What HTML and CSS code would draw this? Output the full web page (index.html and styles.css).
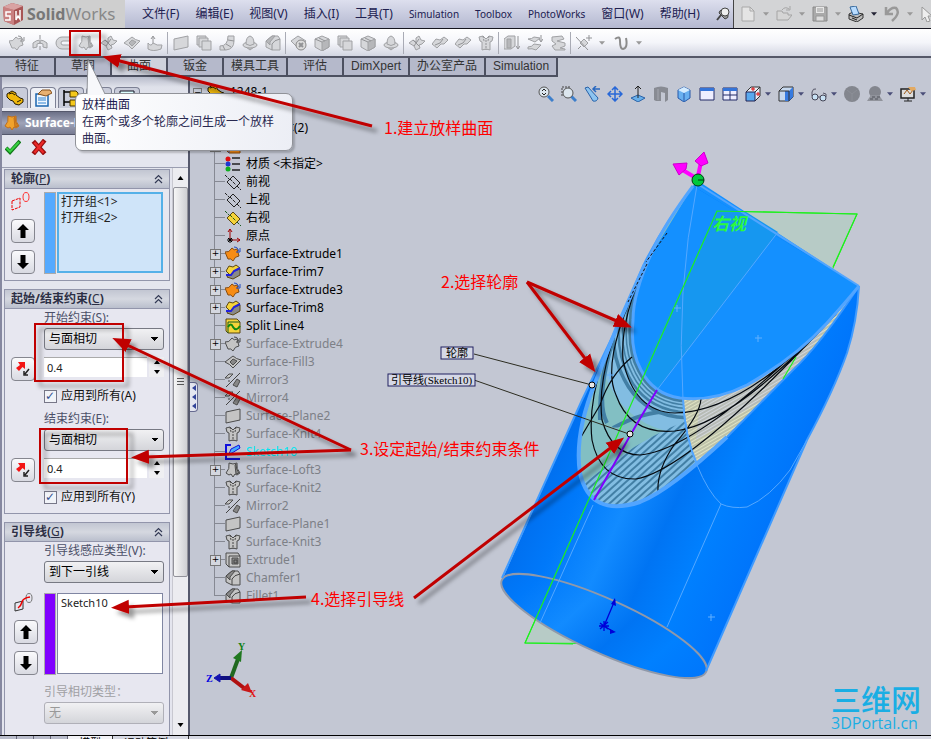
FILE: index.html
```html
<!DOCTYPE html>
<html lang="zh-CN">
<head>
    <meta charset="UTF-8">
    <title>SolidWorks</title>
    <link rel="stylesheet" href="styles.css">
</head>
<body>
<!-- icon sprite -->
<svg class="sprite" aria-hidden="true">
    <symbol id="drop" viewBox="0 0 7 4"><path d="M0 0h7L3.500 4z" fill="currentColor"/></symbol>
    <symbol id="extrude" viewBox="0 0 16 16"><path class="ic" d="M0 6q4 1 7-4 2 3 5 1l2 7q-4 0-6 5-2-3-5-2z"/><path class="ic2" d="M9 1q3-1 5 4M15 2v4h-4"/></symbol>
    <symbol id="revolve" viewBox="0 0 16 16"><path class="ic" d="M1 13V8q7-6 14 0v5l-4-1V9Q8 7 5 9v3z"/><path class="ic2" d="M8 0v4M8 6v3M8 11v4"/></symbol>
    <symbol id="sweep" viewBox="0 0 16 16"><path class="ic" d="M15 2H7a6 6 0 0 0 0 12h8v-4H8a2 2 0 0 1 0-4h7z"/></symbol>
    <symbol id="loft" viewBox="0 0 16 16"><path class="ic" d="M4 1l4 1 4-1q-1 6 3 10l-3 2-2-1-2 3-2-3-2 1-3-2q4-4 3-10z"/><path class="ic3" d="M10 3l1-1q0 6 3 9l-3 1z" stroke="none"/></symbol>
    <symbol id="bound" viewBox="0 0 16 16"><path class="ic" d="M0 8l4-3 3 2V3l3-2 2 4 4 1-3 3-3 1 1 3-4 2-2-4z"/><path class="ic2" d="M4 5l6 6M10 4l-5 7"/></symbol>
    <symbol id="fill" viewBox="0 0 16 16"><path class="ic" d="M0 8l8-6q3 3 8 4l-8 8q-3-4-8-6z"/><path class="ic3" d="M5 8l3-3 4 2-4 4z"/></symbol>
    <symbol id="free" viewBox="0 0 16 16"><path class="ic" d="M1 8q3 4 5 0 4 3 9 2l-1 4q-8 3-13 0z"/><path class="ic2" d="M6 8V2M4 4l2-3 2 3"/></symbol>
    <symbol id="plane" viewBox="0 0 16 16"><path class="ic" d="M1 4l14-3v11L1 15z"/></symbol>
    <symbol id="offset" viewBox="0 0 16 16"><path class="ic" d="M1 1h9v9H1z"/><path class="ic" d="M3 3h9v9H3z"/><path class="ic" d="M6 6h9v9H6z"/></symbol>
    <symbol id="ruled" viewBox="0 0 16 16"><path class="ic" d="M9 1h6v5q0 8-8 9H1v-4q8 0 8-10z"/><path class="ic2" d="M9 5l6 1M7 9l5 3M4 11l2 4"/></symbol>
    <symbol id="cap" viewBox="0 0 16 16"><path class="ic" d="M4 12q4 2 8 0l-4 3z"/><ellipse class="ic" cx="8" cy="10" rx="7" ry="3"/><path class="ic" d="M4 9q0-7 4-8 4 1 4 8-4 3-8 0z"/></symbol>
    <symbol id="fillet" viewBox="0 0 16 16"><path class="ic" d="M1 6l6-5h6l2 3v11H7l-6-3z"/><path class="ic3" d="M1 6l6-5 3 0-5 6v3z"/><path class="ic2" d="M7 15V9q2-4 8-5"/></symbol>
    <symbol id="del" viewBox="0 0 16 16"><path class="ic" d="M0 6l7-5 8 5-7 8z"/><circle cx="10" cy="10" r="5" fill="#ddd" stroke="#888"/><path class="ic2" stroke-width="2" d="M8 8l4 4M12 8l-4 4"/></symbol>
    <symbol id="box" viewBox="0 0 16 16"><path class="ic" d="M1 4l7-3 7 3v8l-7 4-7-4z"/><path class="ic3" d="M8 7l7-3v8l-7 4z"/><path class="ic2" d="M1 4l7 3M5 3l6 3"/></symbol>
    <symbol id="knit" viewBox="0 0 16 16"><path class="ic" d="M1 2l4-1 3 3 3-3 4 1-1 4-2 1v8l-4-1-4 1V7L2 6z"/><path class="ic2" d="M5 1l1 5M11 1l-1 5M8 5v10" stroke-dasharray="2 1"/></symbol>
    <symbol id="thick" viewBox="0 0 16 16"><path class="ic" d="M0 4l4-3h7v10l-4 3H0z"/><path class="ic3" d="M3 4h4v9H3z"/><path class="ic2" d="M14 1v12M12 11l2 3 2-3"/></symbol>
    <symbol id="swap" viewBox="0 0 16 16"><path class="ic" d="M1 4q4 0 6-2l6 1-5 4zM1 12q4 0 6-3l7 1-5 5q-4-2-8-1z"/><path class="ic2" d="M14 0v6M12 4l2 3 2-3"/></symbol>
    <symbol id="cut" viewBox="0 0 16 16"><path class="ic" d="M2 2l10-1 2 3-7 2 8 2v3l-5 2 5 1v1H5l-3-4 4-2-4-3z"/></symbol>
    <symbol id="refs" viewBox="0 0 16 16"><path class="ic" d="M4 8l4-4 4 4-4 4z"/><path class="ic2" d="M0 2l12 13M13 0v6M10 3h6M2 14l3-3"/></symbol>
    <symbol id="curve" viewBox="0 0 16 16"><path d="M2 4q5-4 5 2 0 8 3 8 5-1 3-11" fill="none" stroke="#8c8c8c" stroke-width="2"/></symbol>
    <symbol id="trim" viewBox="0 0 16 16"><path class="ic3" d="M4 9l11-4v6l-7 4-6-2z"/><path class="ic" d="M1 7l3-5 4 1 3-2 4 3-6 3-4 4z"/><path d="M1 11l5 0 3-4 6-3" fill="none" stroke="#2222dd" stroke-width="2"/></symbol>
    <symbol id="trimoff" viewBox="0 0 16 16"><path class="ic" d="M0 9l4-5 4 1 4-3 4 3-4 4-3 0-4 4z"/><path class="ic2" d="M3 10l5-2 3-4"/></symbol>
    <symbol id="split" viewBox="0 0 16 16"><path class="ic" d="M1 1h11l3 3v11H3L1 13z"/><path class="ic2" d="M3 4h12M3 4v11"/><path d="M3 9q3-5 5 0 3 5 7-1" fill="none" stroke="#118811" stroke-width="2"/></symbol>
    <symbol id="mirror" viewBox="0 0 16 16"><path class="ic" d="M0 6l4-4 4 0-4 4z"/><path class="ic3" d="M8 13l4-6 3 2-3 6z"/><path class="ic2" d="M1 15L15 1M3 9l2 0"/></symbol>
    <symbol id="refplane" viewBox="0 0 16 16"><path class="ic" d="M2 8l6-6 7 7-6 6z"/><path class="ic2" d="M0 1l4 4M12 12l4 4M5 5l6 6" stroke-dasharray="3 1"/></symbol>
    <symbol id="origin" viewBox="0 0 16 16"><path d="M5 12V1M3 4l2-3 2 3M5 12h10M12 10l3 2-3 2" fill="none" stroke="#a00000"/><path d="M3 10l4 4M7 10l-4 4M2 12h6M5 10v5" stroke="#000"/></symbol>
    <symbol id="mat" viewBox="0 0 16 16"><path d="M7 2h8M7 8h8M7 14h8" stroke="#222" stroke-width="1.500"/><circle cx="3" cy="3" r="2.500" fill="#e01010"/><circle cx="3" cy="8" r="2.500" fill="#2038d0"/><circle cx="3" cy="13" r="2.500" fill="#10b020"/></symbol>
    <symbol id="sketch" viewBox="0 0 16 16"><path d="M6 1H1v14h14" fill="none" stroke="#1111dd" stroke-width="2"/><path d="M4 10l2-5 8-4 1 3-8 5z" fill="#4af" stroke="#11d"/></symbol>
    <symbol id="boss" viewBox="0 0 16 16"><path class="ic" d="M1 1h12l2 3v11H4l-3-3z"/><path class="ic3" d="M7 6h6v6H7z"/><path class="ic2" d="M4 4h11M4 4v11M9 8h3v3H9z"/></symbol>
    <symbol id="part" viewBox="0 0 18 16"><path d="M1 4l5-3 4 2v2l4 3 3 1v3l-4 3-4-1-2-3-3-1-3-3z" fill="#f0b80c" stroke="#221800"/><path d="M3 4l3-1 3 2M11 12l4-2" stroke="#221800" fill="none"/></symbol>
    <symbol id="chev" viewBox="0 0 9 10"><path d="M1 5l3.500-3.500L8 5M1 9l3.500-3.500L8 9" fill="none" stroke="#333a55" stroke-width="1.200"/></symbol>
    <symbol id="up" viewBox="0 0 12 16"><path d="M6 1l6 6H8.500v8h-5V7H0z" fill="#000"/></symbol>
    <symbol id="down" viewBox="0 0 12 16"><path d="M6 15l6-6H8.500V1h-5v8H0z" fill="#000"/></symbol>
    <symbol id="flip" viewBox="0 0 14 14"><path d="M2 0h7v7L6.500 5 3 9 0 6l4-3z" fill="#f31414"/><path d="M13 7l-4 5M8 9v4h4" fill="none" stroke="#222" stroke-width="1.500"/></symbol>
</svg>

<header class="menubar">
    <div class="logo">
        <svg width="22" height="24" viewBox="0 0 22 24"><path d="M1 5l9-4 11 3v14l-9 5-10-4z" fill="#a85555"/><path d="M1 5l11 3v15L2 19z" fill="#c98080"/><path d="M1 5l9-4 11 3-9 4z" fill="#d9a3a3"/><path d="M9 10H4v4h4v4H3M14 9v9l2-4 2 3V8" fill="none" stroke="#fff" stroke-width="1.500"/></svg>
        <b>Solid</b><span>Works</span>
    </div>
    <nav class="menu">
        <a href="#">文件(F)</a>
        <a href="#">编辑(E)</a>
        <a href="#">视图(V)</a>
        <a href="#">插入(I)</a>
        <a href="#">工具(T)</a>
        <a href="#" class="en">Simulation</a>
        <a href="#" class="en">Toolbox</a>
        <a href="#" class="en">PhotoWorks</a>
        <a href="#">窗口(W)</a>
        <a href="#">帮助(H)</a>
        <svg width="14" height="14" viewBox="0 0 14 14"><path d="M1 13l4-5" stroke="#444" stroke-width="2"/><path d="M3 6l6 6q4-1 3-4L7 3Q3 3 3 6z" fill="#999" stroke="#444"/><circle cx="9" cy="5" r="4" fill="#eee" stroke="#444"/></svg>
    </nav>
    <div class="quick">
        <button aria-label="新建"><svg viewBox="0 0 16 16"><path d="M2 1h8l4 4v10H2z" fill="#e4e4e4" stroke="#a8a8a8"/><path d="M10 1v4h4" fill="none" stroke="#a8a8a8"/></svg></button><svg class="drop"><use href="#drop"/></svg>
        <button aria-label="打开"><svg viewBox="0 0 16 16"><path d="M1 14V5h5l1 2h5v2h4l-4 5z" fill="#d5d5d5" stroke="#a5a5a5"/><path d="M6 4q3-4 7-1M14 0v4h-4" fill="none" stroke="#a5a5a5"/></svg></button><svg class="drop"><use href="#drop"/></svg>
        <button aria-label="保存"><svg viewBox="0 0 16 16"><path d="M1 1h14v14H1z" fill="#aaa" stroke="#888"/><path d="M4 1h8v6H4z" fill="#e8e8e8"/><path d="M4 10h8v5H4zM5 3h6M5 5h6" fill="#ddd" stroke="#999"/></svg></button><svg class="drop"><use href="#drop"/></svg>
        <button aria-label="打印"><svg viewBox="0 0 16 16"><path d="M1 8l4-2 10 2v4l-6 4-8-3z" fill="#bbb" stroke="#333"/><path d="M2 1l6-1 3 8-6 1z" fill="#b8dcff" stroke="#37699c"/><path d="M1 9l8 3 6-4M4 12l5 2" fill="none" stroke="#222"/></svg></button><svg class="drop dark"><use href="#drop"/></svg>
        <button aria-label="撤消"><svg viewBox="0 0 16 16"><path d="M2 1v7h7M3 7q4-6 9-5 5 5-4 13" fill="none" stroke="#999" stroke-width="2.500"/></svg></button><svg class="drop"><use href="#drop"/></svg>
        <button aria-label="选择"><svg viewBox="0 0 16 16"><path d="M2 1l10 9H8l2 5-3 1-2-5-3 3z" fill="#eee" stroke="#999"/></svg></button>
    </div>
</header>

<div class="toolbar">
    <button aria-label="拉伸曲面"><svg><use href="#extrude"/></svg></button>
    <button aria-label="旋转曲面"><svg><use href="#revolve"/></svg></button>
    <button aria-label="扫描曲面"><svg><use href="#sweep"/></svg></button>
    <button aria-label="放样曲面"><svg><use href="#loft"/></svg></button>
    <button aria-label="边界曲面"><svg><use href="#bound"/></svg></button>
    <button aria-label="填充曲面"><svg><use href="#fill"/></svg></button>
    <button aria-label="自由形"><svg><use href="#free"/></svg></button>
    <i class="sep"></i>
    <button aria-label="平面区域"><svg><use href="#plane"/></svg></button>
    <button aria-label="等距曲面"><svg><use href="#offset"/></svg></button>
    <button aria-label="直纹曲面"><svg><use href="#ruled"/></svg></button>
    <button aria-label="中面"><svg><use href="#cap"/></svg></button>
    <button aria-label="圆角"><svg><use href="#fillet"/></svg></button>
    <i class="sep"></i>
    <button aria-label="删除面"><svg><use href="#del"/></svg></button>
    <button aria-label="替换面"><svg><use href="#box"/></svg></button>
    <button aria-label="移动面"><svg><use href="#offset"/></svg></button>
    <button aria-label="删除孔"><svg><use href="#box"/></svg></button>
    <button aria-label="分型面"><svg><use href="#cap"/></svg></button>
    <i class="sep"></i>
    <button aria-label="延伸曲面"><svg><use href="#bound"/></svg></button>
    <button aria-label="剪裁曲面"><svg><use href="#trimoff"/></svg></button>
    <button aria-label="解除剪裁"><svg><use href="#trimoff"/></svg></button>
    <button aria-label="缝合曲面"><svg><use href="#knit"/></svg></button>
    <i class="sep"></i>
    <button aria-label="加厚"><svg><use href="#thick"/></svg></button>
    <button aria-label="加厚切除"><svg><use href="#swap"/></svg></button>
    <button aria-label="使用曲面切除"><svg><use href="#cut"/></svg></button>
    <i class="sep"></i>
    <button aria-label="参考几何体"><svg><use href="#refs"/></svg></button><svg class="drop"><use href="#drop"/></svg>
    <button aria-label="曲线"><svg><use href="#curve"/></svg></button><svg class="drop"><use href="#drop"/></svg>
</div>

<nav class="tabs">
    <a href="#">特征</a>
    <a href="#">草图</a>
    <a href="#" class="active">曲面</a>
    <a href="#">钣金</a>
    <a href="#">模具工具</a>
    <a href="#">评估</a>
    <a href="#">DimXpert</a>
    <a href="#">办公室产品</a>
    <a href="#">Simulation</a>
</nav>

<main class="work">
    <aside class="panel">
        <div class="paneltabs">
            <button aria-label="设计树"><svg viewBox="0 0 18 16"><use href="#part"/></svg></button>
            <button aria-label="属性" class="on"><svg viewBox="0 0 18 18"><path d="M2 5h12v12H2z" fill="#eef6ff" stroke="#1c66b0" stroke-width="1.500"/><path d="M4 9h8M4 11h8M4 14h8" stroke="#2f82d0"/><path d="M4 5l4-4 8 0 2 3-6 3-4-1z" fill="#e8b070" stroke="#84501c"/></svg></button>
            <button aria-label="配置"><svg viewBox="0 0 18 18"><path d="M2 1v16M2 3h6M2 13h6" stroke="#000" stroke-width="1.500"/><path d="M8 2h6l2 2v4H8zM8 11h6l2 2v4H8z" fill="#f4c81c" stroke="#443300"/></svg></button>
            <button aria-label="尺寸"></button>
            <button aria-label="显示"><svg viewBox="0 0 18 18"><path d="M2 2h14v12H2z" fill="#dff" stroke="#112"/></svg></button>
        </div>
        <h2 class="title"><svg width="16" height="18" viewBox="0 0 16 16"><use href="#loft"/></svg>Surface-Loft</h2>
        <div class="confirm">
            <button aria-label="确定"><svg viewBox="0 0 16 14"><path d="M1 8l4 4L15 1" fill="none" stroke="#107818" stroke-width="4"/><path d="M1.500 8L5 11.500 14 2" fill="none" stroke="#38d040" stroke-width="2"/></svg></button>
            <button aria-label="取消"><svg viewBox="0 0 14 14"><path d="M2 2l10 11M12 1L2 13" stroke="#981010" stroke-width="4"/><path d="M3 3l8 9M11 2L3 12" stroke="#ec2828" stroke-width="2"/></svg></button>
        </div>
        <div class="scroller">
            <div class="groups">
                <section class="group profile">
                    <h3>轮廓(<u>P</u>)<svg><use href="#chev"/></svg></h3>
                    <div class="pick">
                        <div class="side">
                            <svg width="19" height="20" viewBox="0 0 19 20"><path d="M1 9l8-3v9l-8 3z" fill="none" stroke="#e00" stroke-dasharray="3 1"/><ellipse cx="15" cy="5" rx="3" ry="4.500" fill="none" stroke="#f33"/></svg>
                            <button class="sq" aria-label="上移"><svg width="12" height="16"><use href="#up"/></svg></button>
                            <button class="sq" aria-label="下移"><svg width="12" height="16"><use href="#down"/></svg></button>
                        </div>
                        <i class="swatch blue"></i>
                        <ul class="list sel">
                            <li>打开组&lt;1&gt;</li>
                            <li>打开组&lt;2&gt;</li>
                        </ul>
                    </div>
                </section>

                <section class="group">
                    <h3>起始/结束约束(<u>C</u>)<svg><use href="#chev"/></svg></h3>
                    <div class="form">
                        <label for="start">开始约束(S):</label>
                        <select id="start"><option>与面相切</option></select>
                        <div class="spin">
                            <button class="sq" aria-label="反向"><svg width="14" height="14"><use href="#flip"/></svg></button>
                            <input type="text" value="0.4" aria-label="起始相切长度">
                            <span class="arrows"><button aria-label="增加"><svg viewBox="0 0 6 4"><path d="M0 4h6L3 0z"/></svg></button><button aria-label="减少"><svg viewBox="0 0 6 4"><path d="M0 0h6L3 4z"/></svg></button></span>
                        </div>
                        <label class="check"><input type="checkbox" checked>应用到所有(A)</label>
                        <label for="end">结束约束(E):</label>
                        <select id="end"><option>与面相切</option></select>
                        <div class="spin">
                            <button class="sq" aria-label="反向"><svg width="14" height="14"><use href="#flip"/></svg></button>
                            <input type="text" value="0.4" aria-label="结束相切长度">
                            <span class="arrows"><button aria-label="增加"><svg viewBox="0 0 6 4"><path d="M0 4h6L3 0z"/></svg></button><button aria-label="减少"><svg viewBox="0 0 6 4"><path d="M0 0h6L3 4z"/></svg></button></span>
                        </div>
                        <label class="check"><input type="checkbox" checked>应用到所有(Y)</label>
                    </div>
                </section>

                <section class="group guide">
                    <h3>引导线(<u>G</u>)<svg><use href="#chev"/></svg></h3>
                    <div class="form">
                        <label for="gtype">引导线感应类型(V):</label>
                        <select id="gtype"><option>到下一引线</option></select>
                    </div>
                    <div class="pick">
                        <div class="side">
                            <svg width="19" height="20" viewBox="0 0 19 20"><path d="M1 10l8-2v8l-8 2z" fill="none" stroke="#333"/><ellipse cx="15" cy="5" rx="3" ry="4.500" fill="none" stroke="#777"/><path d="M4 15q3-2 4-6t8-5" fill="none" stroke="#e00" stroke-width="1.500"/></svg>
                            <button class="sq" aria-label="上移"><svg width="12" height="16"><use href="#up"/></svg></button>
                            <button class="sq" aria-label="下移"><svg width="12" height="16"><use href="#down"/></svg></button>
                        </div>
                        <i class="swatch purple"></i>
                        <ul class="list"><li>Sketch10</li></ul>
                    </div>
                    <div class="form">
                        <label for="tan" class="off">引导相切类型：</label>
                        <select id="tan" disabled><option>无</option></select>
                    </div>
                </section>
            </div>
            <div class="scrollbar">
                <svg viewBox="0 0 6 4"><path d="M0 4h6L3 0z"/></svg>
                <div class="thumb"><i></i></div>
                <svg viewBox="0 0 6 4"><path d="M0 0h6L3 4z"/></svg>
            </div>
        </div>
    </aside>

    <section class="view">
        <svg class="model" viewBox="190 77 741 658" preserveAspectRatio="xMinYMin meet">
            <defs>
                <linearGradient id="body" gradientUnits="userSpaceOnUse" x1="502" y1="580" x2="705" y2="671">
                    <stop offset="0" stop-color="#0070f0"/><stop offset=".15" stop-color="#0079fa"/>
                    <stop offset=".37" stop-color="#128bff"/><stop offset=".57" stop-color="#0074f3"/>
                    <stop offset=".76" stop-color="#0080ff"/><stop offset="1" stop-color="#0075fb"/>
                </linearGradient>
                <path id="rim" d="M693 186Q664 225 653 250Q633 292 633 320Q630 350 641 370Q653 394 680 398Q713 402 747 385Q795 358 827 323Q845 303 859 286"/>
                <path id="skin" d="M693 186Q664 225 653 250Q633 292 633 320Q630 350 641 370Q653 394 680 398Q713 402 747 385Q795 358 827 323L859 286Q820 345 793 370L727 437Q670 490 640 502Q590 518 580 473Q574 435 595 383L643 268Z"/>
                <clipPath id="skinclip"><use href="#skin"/></clipPath>
                <clipPath id="rightclip"><path d="M683 385Q684 435 698 470L870 340V270z"/></clipPath>
                <clipPath id="lowclip"><path d="M560 500L618 458Q650 435 688 420L700 470 640 520H570z"/></clipPath>
                <clipPath id="leftclip"><path d="M560 250H683V398L690 440 640 432Q610 420 560 440z"/></clipPath>
                <pattern id="stripes" width="6" height="5" patternUnits="userSpaceOnUse" patternTransform="rotate(-42)"><path d="M0 2h6" stroke="#427fa5" stroke-width="2"/></pattern>
                <pattern id="fine" width="5" height="3" patternUnits="userSpaceOnUse" patternTransform="rotate(-30)"><path d="M0 1h5" stroke="#9ca18f"/></pattern>
            </defs>
            <!-- datum plane behind the body -->
            <path d="M717 211L857 214 833 268 670 644 525 643z" fill="#b7cbc6" stroke="#1df01d"/>
            <path d="M697 183L859 286Q857 322 847 353Q834 390 807 440L706 671 604 626 502 580 582 400 617 327 645 262Q665 222 697 183z" fill="url(#body)"/>
            <ellipse cx="604" cy="626" rx="112" ry="27" transform="rotate(24.200 604 626)" fill="url(#body)" stroke="#9099aa" stroke-width="2"/>
            <path d="M502 578L582 400 617 327 645 262Q665 222 697 183M859 286Q857 322 847 353Q834 390 807 440L706 671" fill="none" stroke="#3f9bff" stroke-width="2"/>
            <use href="#rim" fill="#1490ff"/>
            <path d="M693 186L698 181 859 286z" fill="#1490ff"/>
            <path d="M717 211L746 212 778 232 657 390 642 371z" fill="#1697f0"/>
            <!-- loft preview -->
            <use href="#skin" fill="#82bfc3"/>
            <g clip-path="url(#skinclip)">
                <g clip-path="url(#leftclip)" fill="none">
                    <use href="#rim" stroke="#82bde2" stroke-width="70"/>
                    <path d="M585 410Q605 340 645 262M600 420Q598 350 644 264M607 423Q595 400 613 340M613 428Q655 405 690 414" stroke="#427fa5" stroke-width="4"/>
                    <use href="#rim" stroke="#427fa5" stroke-width="42"/>
                    <use href="#rim" stroke="#82bde2" stroke-width="35"/>
                    <use href="#rim" stroke="#427fa5" stroke-width="30"/>
                    <use href="#rim" stroke="#82bde2" stroke-width="25"/>
                    <use href="#rim" stroke="#427fa5" stroke-width="21"/>
                    <use href="#rim" stroke="#82bde2" stroke-width="18"/>
                    <use href="#rim" stroke="#427fa5" stroke-width="14"/>
                    <use href="#rim" stroke="#82bde2" stroke-width="11"/>
                    <use href="#rim" stroke="#427fa5" stroke-width="8"/>
                </g>
                <g clip-path="url(#lowclip)"><path d="M560 410H710V520H560z" fill="#82bde2"/><path d="M560 410H710V520H560z" fill="url(#stripes)"/></g>
                <g clip-path="url(#rightclip)"><path d="M670 270H870V480H670z" fill="#dfe3c4"/><path d="M700 400Q770 370 850 295L780 390 696 440z" fill="#d2d6dc"/><path d="M670 270H870V480H670z" fill="url(#fine)"/></g>
                <path d="M645 266Q620 320 623 360Q634 412 675 413Q745 412 837 312M643 272Q600 360 616 395Q630 435 675 431Q735 424 839 310M640 277Q595 365 602 420Q612 455 640 455Q700 450 838 311M637 284Q585 380 592 440Q600 480 636 479Q690 470 836 314M632 357Q610 375 600 405L581 437M701 399Q700 415 674 445Q657 470 658 491" fill="none" stroke="#050a10" stroke-width="1.200"/>
                <path d="M683 398Q684 435 698 467" fill="none" stroke="#52a5ff" stroke-width="2"/>
            </g>
            <path d="M645 264L617 327 595 383Q574 435 580 473Q590 518 640 502Q670 490 727 437" fill="none" stroke="#52a5ff" stroke-width="4"/>
            <path d="M727 437L793 370Q820 345 859 286" fill="none" stroke="#3a97ff" stroke-width="2"/>
            <use href="#rim" fill="none" stroke="#52a5ff" stroke-width="3"/>
            <path d="M696 183L859 286" stroke="#52a5ff" stroke-width="2"/>
            <path d="M697 185Q676 290 683 400Q686 440 697 465Q708 492 721 504 732 509 747 507 770 497 790 470L807 440M778 232L657 390M721 504L667 627M593 505L540 623" fill="none" stroke="#55a8ff"/>
            <path d="M667 233L646 262M647 264L628 302" stroke="#111" stroke-dasharray="3 2"/>
            <path d="M573 644L525 643 717 211 857 214 833 267M796 357L783 379" fill="none" stroke="#1df01d" stroke-width="1.200"/>
            <path d="M657 390Q633 430 622 450L594 500" fill="none" stroke="#8000ff" stroke-width="2"/>
            <path d="M674 308h7M677 305v7M755 338h7M758 335v7M708 617h7M711 614v7M607 375h7M610 372v7" stroke="#63b0ff"/>
            <text x="712" y="230" class="datum">右视</text>
            <path d="M604 626L615 600M604 626L614 632M600 623l8 6M608 622l-8 7M604 621v10M599 626h10" stroke="#0000d8" stroke-width="1.300"/><path d="M615 598l-4 6 5 2zM616 632l-6-3v5z" fill="#0000d8"/>
            <!-- direction handles -->
            <path d="M696 178L681 169M698 176L701 162" stroke="#f0f" stroke-width="4"/>
            <path d="M673 164L687 163 686 169 679 175zM704 152L695 161 701 166 708 163z" fill="#f0f" stroke="#c0c"/>
            <circle cx="698" cy="180" r="6" fill="#00c83c" stroke="#003810"/><path d="M698 180h6" stroke="#003810"/>
            <!-- callouts -->
            <path d="M474 354L592 385M474 380L629 434" stroke="#2c2c20"/>
            <g class="callout"><rect x="441" y="347" width="32" height="12"/><text x="446" y="357">轮廓</text><rect x="388" y="374" width="87" height="12"/><text x="391" y="384">引导线(Sketch10)</text></g>
            <g fill="#e8e8e8" stroke="#000"><circle cx="592" cy="385" r="3"/><circle cx="630" cy="434" r="3"/></g>
            <!-- triad -->
            <path d="M231 678L238 659" stroke="#206820" stroke-width="4"/><path d="M242 650l-9 8 8 4z" fill="#207820"/>
            <path d="M231 678L244 688" stroke="#b01010" stroke-width="4"/><path d="M252 693l-4-10-7 7z" fill="#c81818"/>
            <path d="M231 678H219" stroke="#101080" stroke-width="4"/><path d="M214 678l6-4v8z" fill="#1414b0" stroke="#1414b0"/>
            <g class="axis"><text x="238" y="650" fill="#108010">Y</text><text x="249" y="697" fill="#e01010">X</text><text x="206" y="682" fill="#0000e0">Z</text></g>
            <g class="mark"><text x="831" y="711" class="big">三维网</text><text x="831" y="729">3DPortal.cn</text></g>
        </svg>

        <ul class="tree">
            <li class="root"><i class="box">−</i><svg><use href="#part"/></svg>1248-1</li>
            <li class="p"><svg class="gold"><use href="#boss"/></svg>注解</li>
            <li class="p"><svg class="gold"><use href="#boss"/></svg>曲面实体(2)</li>
            <li class="p"><svg class="orange"><use href="#boss"/></svg>实体</li>
            <li><svg><use href="#mat"/></svg>材质 &lt;未指定&gt;</li>
            <li><svg class="line"><use href="#refplane"/></svg>前视</li>
            <li><svg class="line"><use href="#refplane"/></svg>上视</li>
            <li><svg class="gold"><use href="#refplane"/></svg>右视</li>
            <li><svg><use href="#origin"/></svg>原点</li>
            <li class="p"><svg class="orange"><use href="#extrude"/></svg>Surface-Extrude1</li>
            <li class="p"><svg class="gold"><use href="#trim"/></svg>Surface-Trim7</li>
            <li class="p"><svg class="orange"><use href="#extrude"/></svg>Surface-Extrude3</li>
            <li class="p"><svg class="gold"><use href="#trim"/></svg>Surface-Trim8</li>
            <li><svg class="gold"><use href="#split"/></svg>Split Line4</li>
            <li class="p off"><svg><use href="#extrude"/></svg>Surface-Extrude4</li>
            <li class="off"><svg><use href="#fill"/></svg>Surface-Fill3</li>
            <li class="off"><svg><use href="#mirror"/></svg>Mirror3</li>
            <li class="off"><svg><use href="#mirror"/></svg>Mirror4</li>
            <li class="off"><svg><use href="#plane"/></svg>Surface-Plane2</li>
            <li class="off"><svg><use href="#knit"/></svg>Surface-Knit4</li>
            <li class="cur"><svg><use href="#sketch"/></svg>Sketch10</li>
            <li class="p off"><svg><use href="#loft"/></svg>Surface-Loft3</li>
            <li class="off"><svg><use href="#knit"/></svg>Surface-Knit2</li>
            <li class="off"><svg><use href="#mirror"/></svg>Mirror2</li>
            <li class="off"><svg><use href="#plane"/></svg>Surface-Plane1</li>
            <li class="off"><svg><use href="#knit"/></svg>Surface-Knit3</li>
            <li class="p off"><svg><use href="#boss"/></svg>Extrude1</li>
            <li class="off"><svg><use href="#fillet"/></svg>Chamfer1</li>
            <li class="off"><svg><use href="#fillet"/></svg>Fillet1</li>
        </ul>

        <div class="hud">
            <button aria-label="整屏显示"><svg viewBox="0 0 16 16"><path d="M10 10l5 5" stroke="#3d7fcb" stroke-width="3"/><circle cx="6" cy="6" r="5" fill="#dce6ee" stroke="#555"/><path d="M4 5l2-2 2 2M4 7l2 2 2-2" stroke="#222" fill="none"/></svg></button>
            <button aria-label="局部放大"><svg viewBox="0 0 16 16"><path d="M10 10l5 5" stroke="#3d7fcb" stroke-width="3"/><circle cx="7" cy="7" r="5" fill="#dce6ee" stroke="#555"/><path d="M1 10V1h9" stroke="#444" fill="none" stroke-dasharray="2 1"/></svg></button>
            <button aria-label="上一视图"><svg viewBox="0 0 16 16"><path d="M1 2l3-1 10 11q-1 4-5 3L6 10z" fill="#8cc4f0" stroke="#2a62a8"/><path d="M16 3h-6M12 0L9 3l3 3" stroke="#2868c0" stroke-width="1.500" fill="none"/></svg></button>
            <button aria-label="平移"><svg viewBox="0 0 16 16"><path d="M8 1v14M1 8h14M5 4l3-3 3 3M5 12l3 3 3-3M4 5L1 8l3 3M12 5l3 3-3 3" stroke="#2868d8" stroke-width="1.500" fill="none"/></svg></button>
            <button aria-label="正视于"><svg viewBox="0 0 16 16"><path d="M1 12l7-3 7 3-7 4z" fill="#69b0ea" stroke="#2a62a8"/><path d="M8 12V1M5 3l3-3 3 3" stroke="#222" fill="none"/></svg></button>
            <button aria-label="剖面视图"><svg viewBox="0 0 16 16"><path d="M1 2q7-3 14 0v12l-3 2V7l-4-1v9H3l-2-1z" fill="#888b93"/><path d="M5 3v11" stroke="#a4a7b0"/></svg></button>
            <button aria-label="视图定向"><svg viewBox="0 0 16 16"><path d="M2 4l6-3 6 3v8l-6 4-6-4z" fill="#69b0f0" stroke="#2858a8"/><path d="M2 4l6 3 6-3-6-3z" fill="#d4ecff"/><path d="M8 7v8" stroke="#2858a8"/></svg></button>
            <button aria-label="单一视图"><svg viewBox="0 0 16 16"><path d="M1 2h14v12H1z" fill="#eef" stroke="#222b66"/><path d="M1 2h14v3H1z" fill="#3574d8"/></svg></button>
            <button aria-label="四视图"><svg viewBox="0 0 16 16"><path d="M1 2h14v12H1z" fill="#eef" stroke="#222b66"/><path d="M1 2h14v3H1z" fill="#3574d8"/><path d="M8 5v9M1 9h14" stroke="#222b66"/></svg></button>
            <button aria-label="视图"><svg viewBox="0 0 16 16"><path d="M1 6l5-5h9v9l-5 5z" fill="#e6ebf4" stroke="#333"/><path d="M1 6h9v9H1z" fill="#59a9ee" stroke="#225"/><path d="M10 6l5-5" fill="none" stroke="#333"/><path d="M8 1v4M6 3h4M13 6v4M11 8h4" stroke="#d11"/></svg></button><svg class="drop"><use href="#drop"/></svg>
            <button aria-label="显示样式"><svg viewBox="0 0 16 16"><path d="M1 5l4-4h10v10l-4 4H1z" fill="#c6d8ee" stroke="#333"/><path d="M7 5h4v10H7zM11 5l4-4v10l-4 4z" fill="#377be0"/><path d="M1 5h10v10" fill="none" stroke="#333"/></svg></button><svg class="drop"><use href="#drop"/></svg>
            <button aria-label="隐藏/显示"><svg viewBox="0 0 16 16"><circle cx="4" cy="11" r="3" fill="#c8e2f5" stroke="#445"/><circle cx="12" cy="12" r="3" fill="#c8e2f5" stroke="#445"/><path d="M1 10V6q1-4 4-3M7 11h2M15 11V8l-3-1" fill="none" stroke="#556"/></svg></button><svg class="drop"><use href="#drop"/></svg>
            <button aria-label="外观"><svg viewBox="0 0 16 16"><circle cx="8" cy="8" r="8" fill="#83868e"/><path d="M3 4l5 4 5-4M8 8v7" stroke="#8c8f97" fill="none"/></svg></button>
            <button aria-label="布景"><svg viewBox="0 0 16 16"><circle cx="8" cy="6" r="6" fill="#83868e"/><path d="M0 15l4-6h8l4 6z" fill="#90939b"/><path d="M3 13h3M8 13h3M5 11h3M10 11h3" stroke="#70737b" stroke-width="2"/></svg></button><svg class="drop"><use href="#drop"/></svg>
            <button aria-label="视图设定"><svg viewBox="0 0 16 16"><path d="M1 3h13v9H1z" fill="#ddd" stroke="#222" stroke-width="1.500"/><path d="M4 15h8M8 12v3" stroke="#222"/><path d="M4 8l3-4 3 4 3-4" stroke="#a05b18" fill="none"/><path d="M8 1h7l1 3-5 1z" fill="#e3aa62"/></svg></button><svg class="drop"><use href="#drop"/></svg>
        </div>
        <button class="collapse" aria-label="折叠面板"><svg viewBox="0 0 4 24"><path d="M4 0v6L0 3zM4 9v6l-4-3zM4 18v6l-4-3z" fill="#334499"/></svg></button>
    </section>
</main>

<footer class="bottom">
    <i></i><i></i><i></i><i></i>
    <a href="#" class="active">模型</a><a href="#">运动算例 1</a>
</footer>

<div class="tip" role="tooltip">
    <svg viewBox="0 0 20 37"><path d="M1 37V36L2 1 19 36v1z" fill="#f7f8fb"/><path d="M1 36L2 1 19 36" fill="none" stroke="#909298"/></svg>
    <strong>放样曲面</strong>
    <p>在两个或多个轮廓之间生成一个放样曲面。</p>
</div>

<!-- tutorial notes over the window -->
<svg class="notes" viewBox="0 0 931 739" preserveAspectRatio="xMinYMin meet">
    <defs>
        <marker id="head" markerUnits="userSpaceOnUse" markerWidth="20" markerHeight="16" refX="4" refY="8" orient="auto"><path d="M0 1l18 7-18 7z" fill="#c00000"/></marker>
        <filter id="shade" filterUnits="userSpaceOnUse" x="0" y="0" width="931" height="739"><feDropShadow dx="5" dy="5" stdDeviation="2" flood-color="#000" flood-opacity=".4"/></filter>
    </defs>
    <g filter="url(#shade)" fill="none" stroke="#c00000" stroke-width="2">
        <rect x="70" y="31" width="30" height="24"/>
        <rect x="35" y="324" width="88" height="57"/>
        <rect x="40" y="429" width="87" height="54"/>
    </g>
    <g filter="url(#shade)" stroke="#c00000" stroke-width="3">
        <path d="M372 126L116 60" marker-end="url(#head)"/>
        <path d="M527 282L619 322" marker-end="url(#head)"/>
        <path d="M527 282L587 361" marker-end="url(#head)"/>
        <path d="M351 450L125 344" marker-end="url(#head)"/>
        <path d="M351 450L145 457" marker-end="url(#head)"/>
        <path d="M306 597L125 607" marker-end="url(#head)"/>
        <path d="M414 598L613 446" marker-end="url(#head)"/>
    </g>
    <g class="steps">
        <text x="384" y="134">1.建立放样曲面</text>
        <text x="441" y="288">2.选择轮廓</text>
        <text x="360" y="455">3.设定起始/结束约束条件</text>
        <text x="311" y="605">4.选择引导线</text>
    </g>
</svg>
</body>
</html>
```

FILE: styles.css
```css
*{
    margin: 0;
    padding: 0;
    box-sizing: border-box;
}
html,body{
    width: 100%;
    height: 100%;
    overflow: hidden;
}
body{
    position: relative;
    display: flex;
    flex-direction: column;
    background: #c3c7d3;
    font: 12px/18px "Noto Sans", "Noto Sans CJK SC", sans-serif;
    color: #000;
}
a{
    color: inherit;
    text-decoration: none;
}
ul{
    list-style: none;
}
button{
    border: 0;
    background: none;
    display: flex;
    align-items: center;
    justify-content: center;
}
svg{
    display: block;
    flex: none;
}
.sprite{
    position: absolute;
    width: 0;
    height: 0;
}
.ic{ fill: var(--a, #d6d7da); stroke: var(--b, #a0a1a4); }
.ic2{ fill: none; stroke: var(--c, #929396); }
.ic3{ fill: var(--d, #b6b7ba); stroke: var(--b, #a0a1a4); }
.drop{
    width: 6px;
    height: 4px;
    color: #999;
}
.drop.dark{
    color: #223;
}

/* menu bar */
.menubar{
    display: flex;
    height: 29px;
    flex: none;
    border-bottom: 1px solid #14141e;
    background: linear-gradient(#dddfee, #b4b8d0);
}
.logo{
    width: 125px;
    display: flex;
    align-items: center;
    padding-left: 2px;
    background: #cfcfcf;
    color: #888;
    font: 17px/28px "Noto Sans", sans-serif;
}
.logo svg{
    margin-right: 3px;
}
.logo b{
    font-size: 16px;
    color: #777;
}
.menu{
    flex: 1;
    display: flex;
    align-items: center;
    gap: 16px;
    padding-left: 17px;
    color: #202050;
    white-space: nowrap;
}
.menu .en{
    font-size: 10px;
}
.quick{
    width: 198px;
    display: flex;
    align-items: center;
    overflow: hidden;
    padding-left: 6px;
    border-left: 1px solid #444;
    background: #d3d4d6;
}
.quick button{
    flex: none;
    width: 16px;
    height: 16px;
}
.quick button svg,.toolbar button svg,.hud button svg{
    width: 16px;
    height: 16px;
}
.quick .drop{
    margin: 0 7px;
}

/* command manager */
.toolbar{
    display: flex;
    align-items: center;
    height: 29px;
    flex: none;
    padding-left: 9px;
    border-bottom: 2px solid #555868;
    background: linear-gradient(#fff, #f4f5fa 50%, #d3d6e2);
}
.toolbar button{
    width: 16px;
    height: 16px;
    margin-right: 7px;
}
.toolbar .drop{
    margin-right: 8px;
}
.sep{
    width: 1px;
    height: 22px;
    margin: 0 5px 0 -3px;
    background: #a9abb5;
}
.tabs{
    display: flex;
    flex: none;
    height: 19px;
    font-family: "Liberation Sans", "Noto Sans CJK SC", sans-serif;
    color: #333;
}
.tabs a{
    min-width: 56px;
    padding: 0 7px;
    border-right: 2px solid #4c5060;
    border-bottom: 2px solid #4c5060;
    background: #b5b9cb;
    text-align: center;
    line-height: 17px;
}
.tabs .active{
    background: #cfd2dc;
}

/* workspace */
.work{
    flex: 1;
    min-height: 0;
    display: flex;
}
.panel{
    width: 190px;
    flex: none;
    display: flex;
    flex-direction: column;
    padding-top: 10px;
    border-left: 2px solid #8688a0;
    border-right: 2px solid #55586c;
    background: linear-gradient(#b9bdcc, #dfe1ea 10px, #e4e5ee 30px);
}
.paneltabs{
    display: flex;
    gap: 2px;
    height: 22px;
    border-bottom: 1px solid #e8e9f0;
}
.paneltabs button{
    width: 26px;
    border: 1px solid #7c8094;
    border-bottom: 0;
    border-radius: 4px 4px 0 0;
    background: #c9ccda;
}
.paneltabs .on{
    background: #eef0f6;
}
.paneltabs svg{
    width: 18px;
    height: 18px;
}
.title{
    --a: #f0a22c;
    --b: #c0701c;
    --d: #d88418;
    display: flex;
    align-items: center;
    gap: 5px;
    height: 24px;
    margin-top: 2px;
    padding-left: 2px;
    border: solid #55586c;
    border-width: 1px 0;
    background: linear-gradient(#6c7087, #9fa3b8 50%, #777b91);
    color: #fff;
    font-size: 12px;
}
.confirm{
    display: flex;
    gap: 10px;
    height: 33px;
    padding: 4px 3px 0;
    align-items: flex-start;
    border-bottom: 1px solid #9a9db0;
}
.confirm svg{
    width: 16px;
    height: 16px;
}
.scroller{
    flex: 1;
    min-height: 0;
    display: flex;
    gap: 2px;
}
.groups{
    flex: 1;
    display: flex;
    flex-direction: column;
    gap: 8px;
    overflow: hidden;
    padding: 1px 0 0 2px;
}
.group{
    flex: none;
    border: 1px solid #9295ab;
    background: #e7e7f0;
    padding-bottom: 6px;
}
.group h3{
    display: flex;
    align-items: center;
    height: 19px;
    padding: 0 6px;
    border-bottom: 1px solid #9295ab;
    background: linear-gradient(#c2c6d2, #d5d8e0 50%, #babfcd);
    font-size: 12px;
    color: #2c2f45;
}
.group h3 u{
    font-weight: normal;
}
.group h3 svg{
    width: 9px;
    height: 10px;
    margin-left: auto;
}
.pick{
    display: flex;
    margin-top: 3px;
    padding-right: 6px;
}
.side{
    width: 39px;
    display: flex;
    flex-direction: column;
    gap: 7px;
    padding-left: 6px;
}
.guide .side{
    padding-left: 9px;
}
.sq{
    width: 24px;
    height: 24px;
    border: 1px solid #85868f;
    border-radius: 4px;
    background: linear-gradient(#fafafc, #d9dae2);
}
.swatch{
    width: 12px;
    margin-right: 1px;
    border: 1px solid #aaa;
}
.blue{ background: #55aaff; }
.purple{ background: #8000ff; }
.list{
    flex: 1;
    height: 81px;
    padding: 1px 3px;
    border: 1px solid #8086a2;
    background: #fff;
    font-size: 12px;
    line-height: 16px;
    color: #222;
}
.guide .list{
    font-size: 11px;
}
.sel{
    padding: 0 2px;
    border: 2px solid #55b0e8;
    background: #cfe4f9;
}
.form{
    display: flex;
    flex-direction: column;
    padding: 0 5px 0 39px;
    color: #4c5068;
}
.form label{
    line-height: 18px;
    white-space: nowrap;
}
.form label.off{
    color: #a0a0a4;
    margin-top: 8px;
}
.form select{
    appearance: none;
    width: 100%;
    height: 22px;
    margin: 1px 0 7px;
    padding-left: 4px;
    border: 1px solid #777983;
    border-radius: 3px;
    font: inherit;
    color: #000;
    background:
        linear-gradient(to bottom left, currentColor 50%, transparent 50%) calc(100% - 8px) 8px / 4px 4px no-repeat,
        linear-gradient(to bottom right, currentColor 50%, transparent 50%) calc(100% - 4px) 8px / 4px 4px no-repeat,
        linear-gradient(#f1f1f3, #d4d5da);
}
.form select:disabled{
    border-color: #b0b0b8;
    color: #999;
    opacity: 1;
}
.spin{
    display: flex;
    gap: 2px;
    margin-left: -33px;
}
.spin .sq{
    margin-right: 7px;
}
.spin input{
    flex: 1;
    min-width: 0;
    height: 20px;
    padding-left: 3px;
    border: 0;
    border-top: 1px solid #aaa;
    background: #fff;
    font: 11px/18px "Noto Sans", sans-serif;
    color: #222;
}
.arrows{
    width: 15px;
    height: 20px;
    display: flex;
    flex-direction: column;
}
.arrows button{
    flex: 1;
    background: #efeff2;
}
.arrows svg{
    width: 6px;
    height: 4px;
}
.form .check{
    display: flex;
    align-items: center;
    gap: 4px;
    height: 18px;
    margin: 6px 0 5px;
    color: #111;
}
.form .check:last-child{
    margin-bottom: 1px;
}
.check input{
    appearance: none;
    width: 13px;
    height: 13px;
    border: 1px solid #778;
    background: #f1f3f8;
}
.check input:checked::before{
    content: "✓";
    display: block;
    font: bold 12px/11px "DejaVu Sans", sans-serif;
    color: #33508f;
}
.scrollbar{
    width: 16px;
    display: flex;
    flex-direction: column;
    align-items: center;
    padding: 8px 0;
    background: #ececf0;
    border-left: 1px solid #c8c8d0;
}
.scrollbar svg{
    width: 7px;
    height: 4px;
}
.thumb{
    width: 15px;
    height: 390px;
    margin: 7px 0 auto;
    display: flex;
    align-items: center;
    justify-content: center;
    border: 1px solid #92929a;
    border-radius: 2px;
    background: linear-gradient(90deg, #f6f6f6, #cfcfd3);
}
.thumb i{
    width: 7px;
    height: 8px;
    background: repeating-linear-gradient(#555 0 1px, transparent 1px 3px);
}

/* graphics area */
.view{
    position: relative;
    flex: 1;
    min-width: 0;
    display: flex;
    align-items: flex-start;
    justify-content: space-between;
}
.model{
    position: absolute;
    top: 0;
    left: 0;
    width: 100%;
    height: 100%;
}
.tree{
    position: relative;
    padding: 6px 0 0 20px;
    white-space: nowrap;
}
.tree li{
    position: relative;
    display: flex;
    align-items: center;
    gap: 5px;
    height: 18px;
    padding-left: 15px;
}
.tree li svg{
    width: 16px;
    height: 16px;
}
.tree li::before{
    content: "";
    position: absolute;
    left: 4px;
    top: 0;
    width: 10px;
    height: 18px;
    border-left: 1px solid #868993;
    background: linear-gradient(#868993, #868993) 0 8px / 10px 1px no-repeat;
}
.tree li:last-child::before{
    height: 9px;
}
.tree .p::after{
    content: "+";
    position: absolute;
    left: 0;
    top: 4px;
    width: 9px;
    height: 9px;
    border: 1px solid #777;
    background: #d4d7df;
    font: 9px/7px "DejaVu Sans", sans-serif;
    text-align: center;
    color: #000;
}
.tree .root{
    margin-left: -17px;
    padding-left: 0;
}
.tree .root::before{
    display: none;
}
.tree .root svg{
    width: 18px;
}
.box{
    width: 9px;
    height: 9px;
    border: 1px solid #777;
    font: 9px/7px "DejaVu Sans", sans-serif;
    text-align: center;
}
.tree .off{
    color: #7d8087;
    --a: #c4c4c4;
    --b: #4c4c4c;
    --c: #444;
    --d: #888;
}
.tree .cur{
    color: #00e5f0;
}
.line{ --a: none; --b: #222; --c: #222; }
.gold{ --a: #f5d33a; --b: #5b4610; --c: #1a5a20; --d: #888; }
.orange{ --a: #f78c14; --b: #8a4a08; --c: #1c48c0; --d: #c05c08; }
.hud{
    position: relative;
    display: flex;
    align-items: center;
    gap: 7px;
    padding: 9px 5px 0 0;
}
.hud button{
    width: 16px;
    height: 16px;
}
.hud .drop{
    margin-left: -3px;
    color: #4a4e78;
}
.collapse{
    position: absolute;
    left: 0;
    top: 305px;
    width: 8px;
    height: 30px;
    border: 1px solid #666a90;
    border-left: 0;
    border-radius: 0 4px 4px 0;
    background: #e4e6f0;
}
.collapse svg{
    width: 4px;
    height: 24px;
}
.datum{
    font: italic bold 17px "Noto Sans CJK SC", sans-serif;
    fill: #2cfa3c;
}
.callout rect{
    fill: #d5d8e6;
    stroke: #202060;
}
.callout text{
    font: 11px "Liberation Serif", "Noto Sans CJK SC", serif;
}
.axis text{
    font: bold 10px "Liberation Serif", serif;
}
.mark{
    fill: #1aaee4;
    font: 16px "Open Sans", sans-serif;
}
.mark .big{
    font: 500 30px "Noto Sans CJK SC", sans-serif;
}

/* model tabs */
.bottom{
    display: flex;
    flex: none;
    height: 4px;
    overflow: hidden;
    border-top: 1px solid #000;
    background: #d6d8e2;
    line-height: 14px;
    font-size: 11px;
}
.bottom i{
    width: 17px;
    border-right: 1px solid #667;
    background: #b9bccb;
}
.bottom a{
    padding: 0 11px;
    border-right: 1px solid #333;
}
.bottom .active{
    background: #f2f2f6;
}

.tip{
    position: absolute;
    left: 75px;
    top: 93px;
    width: 218px;
    padding: 2px 16px 3px 6px;
    border: 1px solid #909298;
    border-radius: 7px;
    background: linear-gradient(100deg, #fff, #eceef5);
    color: #282850;
    line-height: 17px;
    box-shadow: 2px 2px 2px rgba(0,0,0,.2);
}
.tip strong{
    font-weight: normal;
    color: #1c1c50;
}
.tip svg{
    position: absolute;
    left: 10px;
    top: -36px;
    width: 20px;
    height: 37px;
}
.notes{
    position: absolute;
    top: 0;
    left: 0;
    width: 100%;
    height: 100%;
    pointer-events: none;
}
.steps text{
    font: 16px "Noto Sans CJK SC", sans-serif;
    fill: #ff0000;
}
```
